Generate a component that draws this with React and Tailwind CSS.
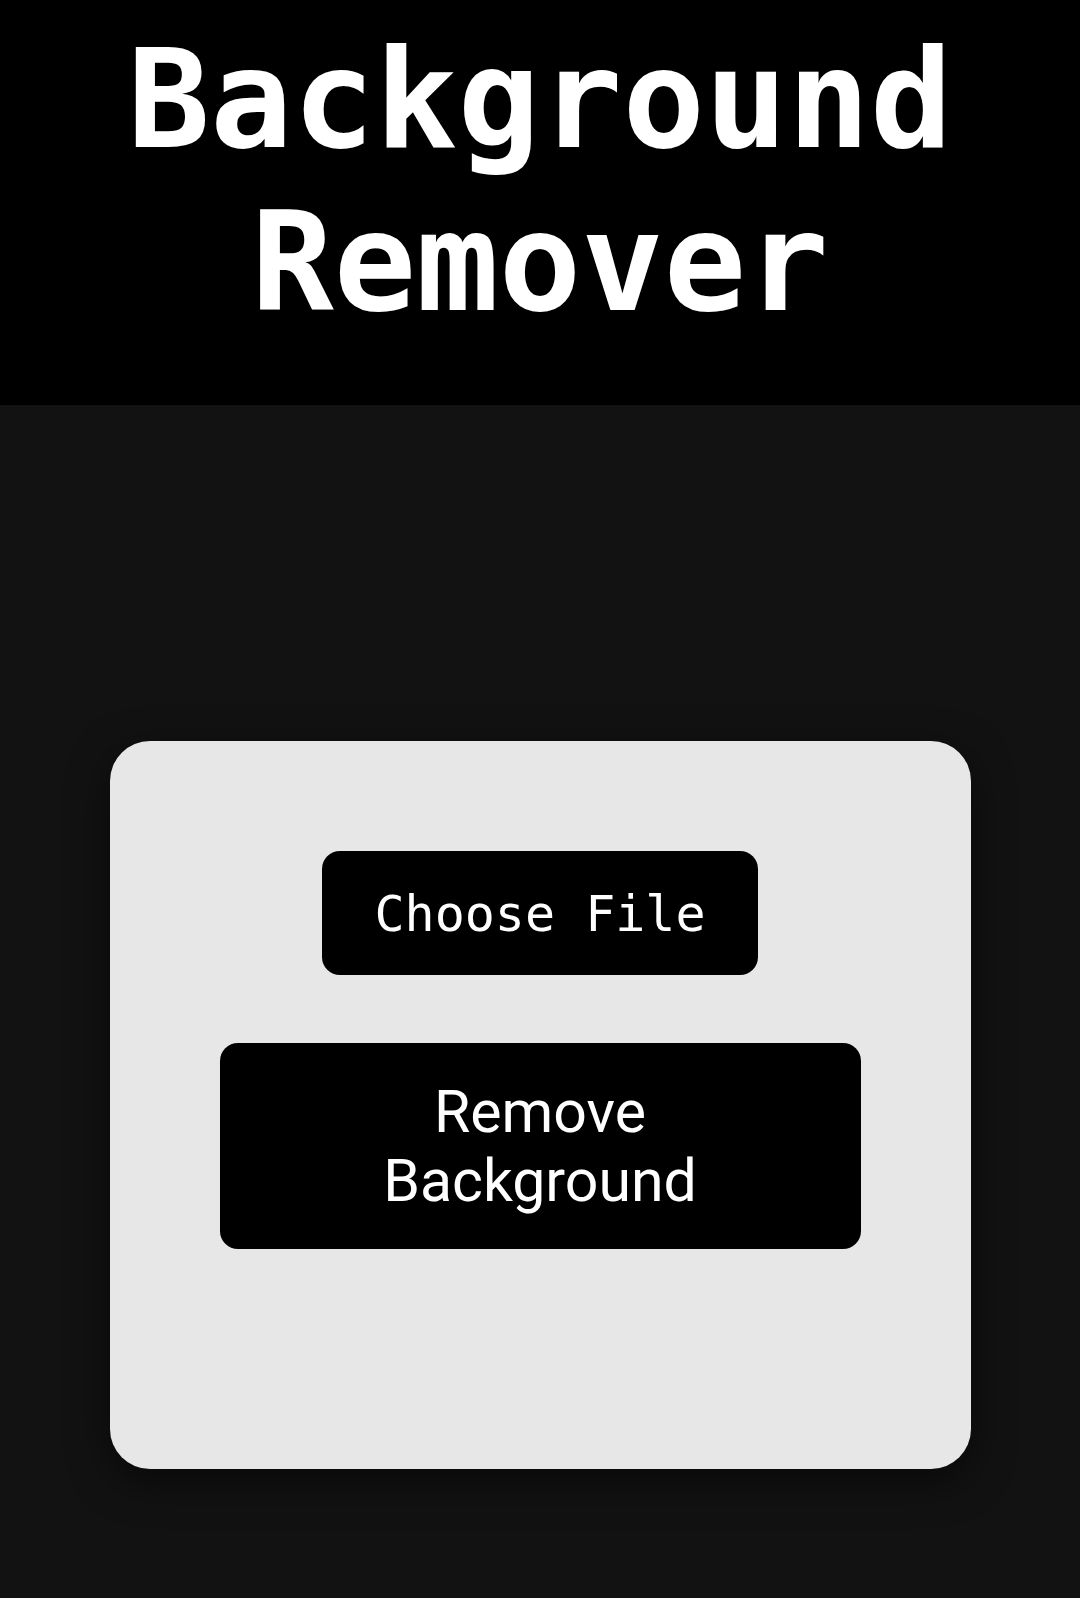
import { useState } from 'react';

export default function App() {
  const [file, setFile] = useState(null);

  return (
    <div className="min-h-[1598px] bg-[#121212] flex flex-col">
      <header className="bg-black pt-[18px] pb-[61px]">
        <h1 className="text-center text-white font-bold text-[137px] leading-[163px] font-['DejaVu_Sans_Mono',monospace]">
          Background
          <br />
          Remover
        </h1>
      </header>

      <main className="flex justify-center pt-[336px]">
        <div className="w-[861px] h-[728px] bg-[#e7e7e7] rounded-[40px] shadow-[0_12px_40px_rgba(0,0,0,0.55)] flex flex-col items-center pt-[110px]">
          <label className="w-[436px] h-[124px] bg-black rounded-[18px] flex items-center justify-center cursor-pointer">
            <span className="text-white text-[50px] font-['DejaVu_Sans_Mono',monospace] pt-[2px]">Choose File</span>
            <input type="file" accept="image/*" className="hidden" onChange={e => setFile(e.target.files[0] || null)} />
          </label>

          <button className="mt-[68px] w-[641px] h-[206px] bg-black rounded-[18px] flex items-center justify-center text-white text-[59px] leading-[69px] font-['Roboto',sans-serif] disabled:opacity-50" disabled={false}>
            <span className="w-[340px] text-center">Remove Background</span>
          </button>
        </div>
      </main>
    </div>
  );
}
